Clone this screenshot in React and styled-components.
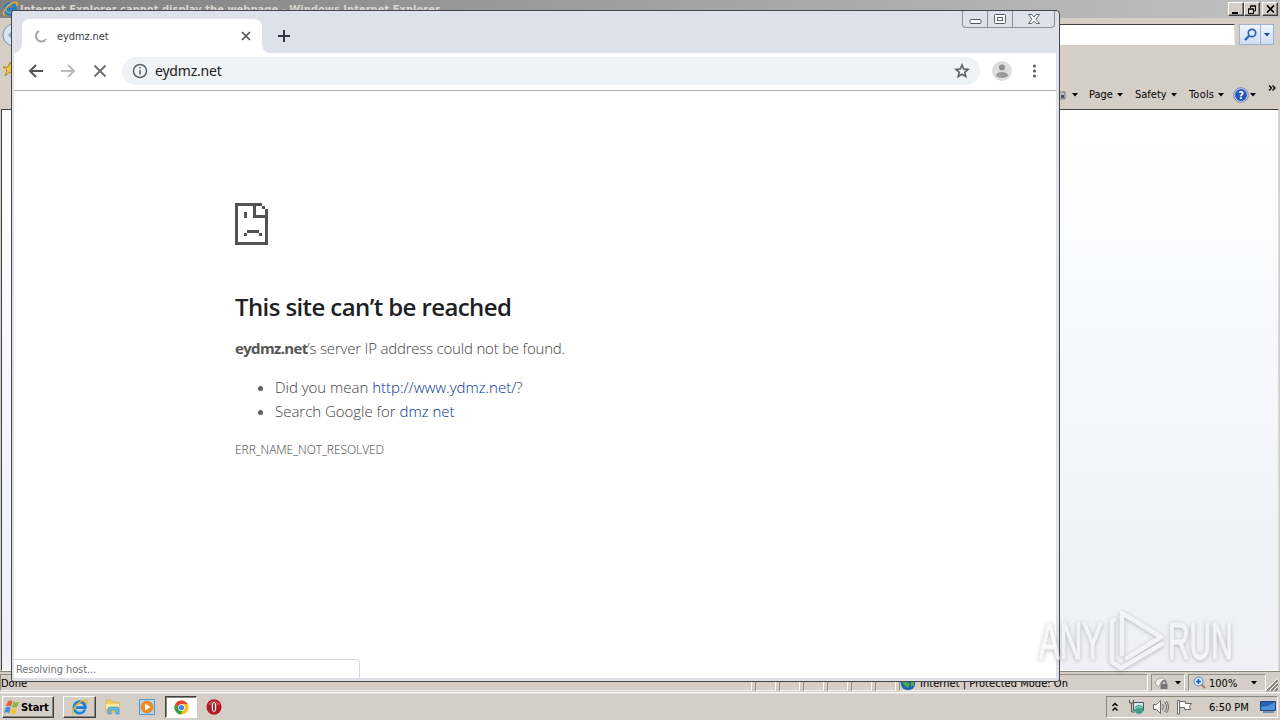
import React from "react";
import styled, { createGlobalStyle } from "styled-components";

const GlobalStyle = createGlobalStyle`
  * { box-sizing: border-box; }
  body {
    margin: 0;
    overflow: hidden;
    font-family: "DejaVu Sans Condensed", "DejaVu Sans", sans-serif;
    font-size: 11px;
    color: #000;
  }
  svg { display: block; flex: none; }
  h1, p, ul { margin: 0; }
`;

const Desktop = styled.div`
  position: relative;
  width: 1280px;
  height: 720px;
  overflow: hidden;
  display: flex;
  flex-direction: column;
  background: #d5cec6;
`;

const Label = styled.span`
  white-space: nowrap;
  font-size: ${(p) => p.$size || 11}px;
  font-weight: ${(p) => (p.$bold ? 700 : 400)};
  letter-spacing: ${(p) => p.$spacing || 0}px;
`;

/* Internet Explorer */

const IeTitle = styled.div`
  height: 18px;
  flex: none;
  display: flex;
  align-items: center;
  padding: 0 2px 0 2px;
  gap: 2px;
  background: linear-gradient(90deg, #808080, #c0c0c0);
  color: #d8d4cc;
`;

const TitleButtons = styled.div`
  display: flex;
  margin-left: auto;
`;

const TitleButton = styled.div`
  width: 16px;
  height: 14px;
  margin-left: ${(p) => p.$gap || 0}px;
  display: flex;
  align-items: center;
  justify-content: center;
  background: #d5cec6;
  border: 1px solid;
  border-color: #fff #404040 #404040 #fff;
  box-shadow: inset -1px -1px #8a857d;
`;

const AddressRow = styled.div`
  height: 33px;
  flex: none;
  display: flex;
  align-items: center;
  padding: 0 6px 0 2px;
  gap: 4px;
`;

const AddressField = styled.div`
  flex: 1;
  height: 22px;
  background: #fff;
  border: 1px solid;
  border-color: #404040 #e8e4de #d5cec6 #404040;
`;

const SearchGroup = styled.div`
  display: flex;
  height: 21px;
  width: 35px;
  border: 1px solid #9db2cc;
  background: linear-gradient(#eef4fc, #cfdef1);
`;

const SearchPart = styled.div`
  width: ${(p) => p.$width}px;
  display: flex;
  align-items: center;
  justify-content: center;
  & + & { border-left: 1px solid #9db2cc; }
`;

const FavoritesRow = styled.div`
  height: 29px;
  flex: none;
  display: flex;
  align-items: flex-end;
  padding: 0 0 4px 3px;
`;

const CommandBar = styled.div`
  height: 29px;
  flex: none;
  display: flex;
  align-items: center;
  justify-content: flex-end;
  padding-right: 4px;
`;

const CommandItem = styled.div`
  display: flex;
  align-items: center;
  justify-content: space-between;
  width: ${(p) => p.$width}px;
  margin-right: ${(p) => p.$after}px;
`;

const Chevrons = styled.div`
  align-self: flex-start;
  padding-top: 5px;
`;

const IePage = styled.div`
  flex: 1;
  margin: 0 1px 0 1px;
  border: 1px solid;
  border-color: #404040 #d8d8d8 #fff #404040;
  background: linear-gradient(#fff 5%, #f4f6fb 55%, #eef1f5 85%, #f0f0f5);
`;

const StatusBar = styled.div`
  height: 22px;
  flex: none;
  display: flex;
  align-items: stretch;
  gap: 3px;
  padding: 2px 0 1px;
  border-top: 1px solid #8a857d;
  border-bottom: 1px solid #fff;
`;

const StatusPanel = styled.div`
  width: ${(p) => p.$width}px;
  flex: none;
  display: flex;
  align-items: center;
  gap: ${(p) => p.$gap || 0}px;
  padding-top: 1px;
  padding-left: ${(p) => p.$pad || 0}px;
  border: 1px solid;
  border-color: #938d85 #fff #f6f3ee #938d85;
`;

/* Taskbar */

const Taskbar = styled.div`
  height: 27px;
  flex: none;
  display: flex;
  align-items: flex-start;
  padding: 2px 2px 0;
  border-top: 1px solid #e3ded7;
`;

const TaskButton = styled.div`
  width: ${(p) => p.$width}px;
  height: 22px;
  margin-left: ${(p) => p.$before || 0}px;
  display: flex;
  align-items: center;
  justify-content: center;
  background: ${(p) => (p.$pressed ? "#fdfdfc" : "transparent")};
  border: 1px solid;
  border-color: ${(p) =>
    p.$flat ? "transparent" : p.$pressed ? "#404040 #fff #fff #404040" : "#fff #404040 #404040 #fff"};
  box-shadow: ${(p) => (p.$flat ? "none" : p.$pressed ? "inset 1px 1px #8a857d" : "inset -1px -1px #8a857d")};
`;

const StartButton = styled(TaskButton)`
  justify-content: flex-start;
  padding-left: 1px;
`;

const Tray = styled.div`
  width: 172px;
  height: 22px;
  margin-left: auto;
  display: flex;
  align-items: center;
  padding: 0 1px 0 4px;
  border: 1px solid;
  border-color: #8a857d #fff #fff #8a857d;
`;

const Clock = styled.div`
  width: 46px;
  margin: 0 9px 0 16px;
`;

/* Chrome */

const ChromeWindow = styled.div`
  position: absolute;
  left: 11px;
  top: 10px;
  width: 1049px;
  height: 672px;
  display: flex;
  flex-direction: column;
  padding: 0 3px 3px 2px;
  background: #dee1e6;
  border: 1px solid #45474b;
  border-radius: 3px 4px 3px 3px;
  overflow: hidden;
`;

const TabStrip = styled.div`
  height: 42px;
  flex: none;
  display: flex;
  align-items: flex-end;
  background: #dee1e9;
`;

const Tab = styled.div`
  position: relative;
  width: 240px;
  height: 34px;
  margin-left: 8px;
  padding: 0 10px 0 12px;
  display: flex;
  align-items: center;
  gap: 10px;
  background: #fff;
  border-radius: 8px 8px 0 0;
  color: #3c4043;
  &::before, &::after {
    content: "";
    position: absolute;
    bottom: 0;
    width: 8px;
    height: 8px;
  }
  &::before {
    left: -8px;
    background: radial-gradient(circle at 0 0, transparent 7.5px, #fff 8px);
  }
  &::after {
    right: -8px;
    background: radial-gradient(circle at 100% 0, transparent 7.5px, #fff 8px);
  }
`;

const TabName = styled.div`
  flex: 1;
`;

const NewTab = styled.div`
  height: 34px;
  display: flex;
  align-items: center;
  margin-left: 16px;
`;

const WindowControls = styled.div`
  align-self: flex-start;
  display: flex;
  height: 17px;
  margin: 0 1px 0 auto;
  border: 1px solid #8c9096;
  border-top: 0;
  border-radius: 0 0 4px 4px;
`;

const Control = styled.div`
  width: ${(p) => p.$width}px;
  display: flex;
  align-items: center;
  justify-content: center;
  & + & { border-left: 1px solid #8c9096; }
`;

const Toolbar = styled.div`
  height: 38px;
  flex: none;
  display: flex;
  align-items: center;
  padding: 0 13px 1px 13px;
  background: #fff;
  border-bottom: 1px solid #b3b3b3;
`;

const NavButtons = styled.div`
  display: flex;
  gap: 14px;
`;

const Omnibox = styled.div`
  flex: 1;
  height: 28px;
  margin: 0 12px 0 13px;
  padding: 0 9px 0 10px;
  display: flex;
  align-items: center;
  gap: 7px;
  background: #f0f3f5;
  border-radius: 14px;
  color: #202124;
  font-family: "Noto Sans", sans-serif;
`;

const UrlText = styled.div`
  flex: 1;
  padding-bottom: 2px;
`;

const Viewport = styled.div`
  flex: 1;
  display: flex;
  flex-direction: column;
  justify-content: space-between;
  background: #fff;
`;

const ErrorPage = styled.div`
  padding: 112px 0 0 221px;
  font-family: "Open Sans", "Noto Sans", sans-serif;
  font-size: 15px;
  font-weight: 300;
  line-height: 24px;
  color: #424242;
`;

const Heading = styled.h1`
  margin-top: 46px;
  font-size: 24px;
  font-weight: 600;
  line-height: 32px;
  letter-spacing: -0.6px;
  color: #202124;
  white-space: nowrap;
`;

const Summary = styled.p`
  margin-top: 13px;
  letter-spacing: -0.2px;
`;

const Host = styled.strong`
  font-weight: 700;
  letter-spacing: -0.65px;
  color: #555;
`;

const Suggestions = styled.ul`
  margin-top: 15px;
  padding-left: 40px;
  letter-spacing: -0.02px;
  li::marker { color: #646464; }
`;

const Link = styled.a`
  color: #003594;
`;

const ErrorCode = styled.div`
  margin-top: 15px;
  font-size: 12px;
  letter-spacing: -0.06px;
`;

const StatusBubble = styled.div`
  width: 346px;
  height: 19px;
  padding: 0 0 0 2px;
  display: flex;
  align-items: center;
  border: 1px solid #d5d8dc;
  border-width: 1px 1px 0 0;
  border-radius: 0 4px 0 0;
  color: #707478;
`;

const Watermark = styled.svg`
  position: absolute;
  left: 1030px;
  top: 602px;
  overflow: visible;
  filter: drop-shadow(0 1px 2px rgba(90, 95, 105, 0.6));
`;

const Caret = () => (
  <svg width="6" height="4" viewBox="0 0 6 4"><path d="M0 0h6L3 3.5z" fill="#000" /></svg>
);

const IeIcon = ({ size = 18 }) => (
  <svg width={size} height={size} viewBox="0 0 18 18">
    <path d="M14.700 11.200a6 6 0 1 1 .4-3.100v1H5.500" fill="none" stroke="#1c7fd0" strokeWidth="3" />
    <path d="M13.800 10.700a5 5 0 0 1-9.500-1" fill="none" stroke="#65c5f3" strokeWidth="1" />
    <path d="M3 16.500C-1 15.500 4 5.500 12 2c4.500-2 6 0 4.500 3.500" fill="none" stroke="#f0b722" strokeWidth="1.500" />
  </svg>
);

const WindowsFlag = () => (
  <svg width="17" height="17" viewBox="0 0 17 17">
    <path d="M4 2c2-1 3-.7 4.500.2L7 7.500C5.500 6.500 4 6.500 2 7.300z" fill="#e8602c" />
    <path d="M9.500 2.800c2 1 3.500.8 5.500-.2l-1.600 5.200c-2 1-3.500 1-5.400.1z" fill="#7fb942" />
    <path d="M1.700 8.500c2-1 3.400-.8 5 .1L5.200 14c-1.600-1-3-1-5-.1z" fill="#3f8fd8" />
    <path d="M7.700 9.200c2 1 3.400.8 5.400-.1l-1.600 5.300c-2 1-3.500 1-5.300 0z" fill="#f8c42d" />
  </svg>
);

const FolderIcon = () => (
  <svg width="18" height="18" viewBox="0 0 18 18">
    <path d="M2 4V2h5l1 2h7v10H2z" fill="#edcf67" stroke="#cda63d" strokeWidth=".6" />
    <path d="M2 6h13v5H2z" fill="#faeaa0" />
    <path d="M4 16v-5q0-2 2-2h7q2 0 2 2v5h-3v-4H7v4z" fill="#68b8e2" stroke="#4389ae" strokeWidth=".6" />
  </svg>
);

const PlayerIcon = () => (
  <svg width="16" height="16" viewBox="0 0 16 16">
    <path d="M.5.500h15v15H.500z" fill="#b4d9f2" stroke="#5595c8" />
    <circle cx="8" cy="8" r="6" fill="#f28a1c" stroke="#c66b10" strokeWidth=".5" />
    <path d="M6 4.500v7L11.500 8z" fill="#fff" />
  </svg>
);

const ChromeIcon = () => (
  <svg width="15" height="15" viewBox="0 0 16 16">
    <circle cx="8" cy="8" r="7.500" fill="#fbc116" />
    <path d="M1.500 4.200A7.500 7.500 0 0 1 14.500 4.300H8L5 9.800z" fill="#df4636" />
    <path d="M1.500 4.200A7.500 7.500 0 0 0 7 15.400l3.300-5.500H5z" fill="#2ca24c" />
    <circle cx="8" cy="8" r="3.600" fill="#fff" />
    <circle cx="8" cy="8" r="2.800" fill="#4285e8" />
  </svg>
);

const OperaIcon = () => (
  <svg width="16" height="16" viewBox="0 0 16 16">
    <ellipse cx="8" cy="8" rx="7.500" ry="7.700" fill="#b71820" />
    <path d="M2 5Q8-2 14 5l-1 1H3z" fill="#df6a66" opacity=".6" />
    <ellipse cx="8" cy="8" rx="2.700" ry="5.500" fill="#fff" stroke="#7f0d12" strokeWidth=".6" />
    <ellipse cx="8" cy="8" rx=".9" ry="4.500" fill="#8e1218" />
  </svg>
);

const HelpIcon = () => (
  <svg width="16" height="16" viewBox="0 0 16 16">
    <circle cx="8" cy="8" r="7.300" fill="#c9d7f2" stroke="#7187b8" />
    <circle cx="8" cy="8" r="5.900" fill="#2455bd" />
    <text x="8" y="12" textAnchor="middle" fontSize="11" fontWeight="700" fill="#fff">?</text>
  </svg>
);

const Globe = () => (
  <svg width="16" height="16" viewBox="0 0 16 16">
    <circle cx="8" cy="8" r="7.300" fill="#2463b5" />
    <path d="M3 3q4-3 6 0L7 7l3 2-2 4-3-2-3-4zM11 5l3 1v4l-3 2z" fill="#48aa48" />
  </svg>
);

const SadPage = () => (
  <svg width="33" height="42" viewBox="0 0 33 42" shapeRendering="crispEdges" fill="#535353">
    <path d="M0 0h27v3H21v9h9v-3h3v33H0zM3 3v36h27V15H18V3z" fillRule="evenodd" />
    <path d="M27 3h3v3h-3zM30 6h3v6h-3zM9 9h3v6H9zM9 30h3v3H9zM12 27h12v3H12zM24 30h3v3h-3z" />
  </svg>
);

const InternetExplorer = () => (
  <>
    <IeTitle>
      <IeIcon size={16} />
      <Label $bold $size={11} $spacing={0.04}>
        Internet Explorer cannot display the webpage - Windows Internet Explorer
      </Label>
      <TitleButtons>
        <TitleButton><svg width="10" height="9"><path d="M1 8h6" stroke="#000" strokeWidth="2" /></svg></TitleButton>
        <TitleButton>
          <svg width="10" height="9" fill="none" stroke="#000">
            <path d="M3.500 3V1H8.500V6H7M3 1h6M1.500 4h5v4.500h-5zM1 4h6" />
          </svg>
        </TitleButton>
        <TitleButton $gap={2}>
          <svg width="9" height="8"><path d="M1 .500l7 7M8 .500l-7 7" stroke="#000" strokeWidth="1.700" /></svg>
        </TitleButton>
      </TitleButtons>
    </IeTitle>
    <AddressRow>
      <svg width="24" height="24" viewBox="0 0 24 24">
        <circle cx="12" cy="12" r="11" fill="#d8e3ef" stroke="#7e8fa5" />
        <path d="M14 6l-6 6 6 6" fill="none" stroke="#8ba9cd" strokeWidth="3" />
      </svg>
      <AddressField />
      <SearchGroup>
        <SearchPart $width={21}>
          <svg width="13" height="13" fill="none" stroke="#2460bd">
            <circle cx="8" cy="5" r="3.700" strokeWidth="1.700" />
            <path d="M5 8l-4 4" strokeWidth="2.400" />
          </svg>
        </SearchPart>
        <SearchPart $width={13}>
          <svg width="6" height="4"><path d="M0 0h6L3 3.500z" fill="#174ea3" /></svg>
        </SearchPart>
      </SearchGroup>
    </AddressRow>
    <FavoritesRow>
      <svg width="14" height="14"><path d="M7 0l2 5h5l-4 3 2 6-5-4-5 4 2-6-4-3h5z" fill="#f2c64c" stroke="#b88422" /></svg>
    </FavoritesRow>
    <CommandBar>
      <CommandItem $width={20} $after={11}>
        <svg width="8" height="12"><path d="M1 3h6v7H1z" fill="#b9bec4" stroke="#73777c" /><path d="M3 6h3v3H3z" fill="#4f5358" /></svg>
        <Caret />
      </CommandItem>
      <CommandItem $width={34} $after={12}><Label>Page</Label><Caret /></CommandItem>
      <CommandItem $width={42} $after={12}><Label>Safety</Label><Caret /></CommandItem>
      <CommandItem $width={35} $after={9}><Label $spacing={0.2}>Tools</Label><Caret /></CommandItem>
      <CommandItem $width={23} $after={12}><HelpIcon /><Caret /></CommandItem>
      <Chevrons>
        <svg width="8" height="6" fill="none" stroke="#000" strokeWidth="1.300"><path d="M1 .500l2.500 2.500L1 5.500M4.500.500L7 3 4.500 5.500" /></svg>
      </Chevrons>
    </CommandBar>
    <IePage />
    <StatusBar>
      <StatusPanel $width={752}><Label>Done</Label></StatusPanel>
      {[0, 1, 2, 3, 4, 5].map((n) => <StatusPanel key={n} $width={21} />)}
      <StatusPanel $width={249} $gap={4}>
        <Globe /><Label $spacing={0.04}>Internet | Protected Mode: On</Label>
      </StatusPanel>
      <StatusPanel $width={34} $pad={2} $gap={4}>
        <svg width="17" height="16" fill="none">
          <path d="M1 9q1-6 8-6l3 3-5 1-2 5z" fill="#f0f0f0" stroke="#aaa" />
          <path d="M8 9V7q2-3 4 0v2" stroke="#777" strokeWidth="1.400" />
          <path d="M6.500 9h7v5h-7z" fill="#777" />
        </svg>
        <Caret />
      </StatusPanel>
      <StatusPanel $width={78} $pad={4} $gap={3}>
        <svg width="13" height="14" fill="none">
          <path d="M8 8l4 4" stroke="#aa8246" strokeWidth="2" />
          <circle cx="5.500" cy="5.500" r="4.500" fill="#d6ebfa" stroke="#4e84c4" />
          <path d="M3 5.500h5M5.500 3v5" stroke="#185cae" strokeWidth="1.600" />
        </svg>
        <Label>100%</Label>
        <svg width="20" height="4"><path d="M11 0h6l-3 3.500z" /></svg>
      </StatusPanel>
      <svg width="12" height="18" style={{ marginLeft: -3 }}>
        <path d="M1 17L12 6M5 17l7-7M9 17l3-3" stroke="#8a857d" strokeWidth="2" />
        <path d="M0 16L12 4M4 16l8-8M8 16l4-4" stroke="#fff" />
      </svg>
    </StatusBar>
  </>
);

const Chrome = () => (
  <ChromeWindow>
    <TabStrip>
      <Tab>
        <svg width="13" height="13" fill="none"><path d="M5 1A5.500 5.500 0 1 0 12 9" stroke="#a5a7ab" strokeWidth="2" /></svg>
        <TabName><Label $spacing={-0.1}>eydmz.net</Label></TabName>
        <svg width="12" height="12"><path d="M2 2l8 8M10 2l-8 8" stroke="#505458" strokeWidth="1.700" /></svg>
      </Tab>
      <NewTab><svg width="12" height="12"><path d="M6 0v12M0 6h12" stroke="#343746" strokeWidth="2" /></svg></NewTab>
      <WindowControls>
        <Control $width={24}><svg width="13" height="15"><rect x="1" y="7.500" width="11" height="4" rx="1" fill="#fff" stroke="#555b66" /></svg></Control>
        <Control $width={25}>
          <svg width="12" height="11" fill="#fff" stroke="#555b66"><rect x=".5" y=".5" width="11" height="9" rx="1" /><rect x="3.500" y="3.500" width="5" height="3" /></svg>
        </Control>
        <Control $width={42}>
          <svg width="12" height="11" viewBox="0 0 12 11"><path d="M.5.500h3.300L6 3 8.200.500h3.300L8 5.200l3.500 4.300H8.200L6 7.200 3.800 9.500H.5L4 5.200z" fill="#fff" stroke="#626873" /></svg>
        </Control>
      </WindowControls>
    </TabStrip>
    <Toolbar>
      <NavButtons>
        <svg width="18" height="16" fill="none"><path d="M16 8H3M9 2L3 8l6 6" stroke="#505458" strokeWidth="2" /></svg>
        <svg width="18" height="16" fill="none"><path d="M2 8h13M9 2l6 6-6 6" stroke="#b9bbbe" strokeWidth="2" /></svg>
        <svg width="18" height="16"><path d="M3.500 2.500l11 11M14.500 2.500l-11 11" stroke="#6a6e73" strokeWidth="1.900" /></svg>
      </NavButtons>
      <Omnibox>
        <svg width="16" height="16" fill="none" stroke="#5f6368" strokeWidth="1.500"><circle cx="8" cy="8" r="6.500" /><path d="M8 7v4.500M8 4v1.600" strokeWidth="1.600" /></svg>
        <UrlText><Label $size={14} $spacing={-0.2}>eydmz.net</Label></UrlText>
        <svg width="18" height="18" viewBox="0 0 24 24"><path d="M22 9.240l-7.190-.62L12 2 9.190 8.630 2 9.240l5.460 4.730L5.820 21 12 17.270 18.180 21l-1.630-7.030L22 9.240zM12 15.400l-3.760 2.270 1-4.280-3.320-2.880 4.380-.38L12 6.100l1.710 4.040 4.380.38-3.320 2.880 1 4.280L12 15.400z" fill="#53575c" stroke="#53575c" strokeWidth=".5" /></svg>
      </Omnibox>
      <svg width="20" height="20"><circle cx="10" cy="10" r="10" fill="#dedede" /><circle cx="10" cy="6.500" r="3" fill="#8f8f8f" /><ellipse cx="10" cy="14" rx="6" ry="3" fill="#9a9a9a" /></svg>
      <svg width="18" height="16" style={{ marginLeft: 13 }} fill="#5f6368"><circle cx="9.500" cy="3" r="1.600" /><circle cx="9.500" cy="8" r="1.600" /><circle cx="9.500" cy="13" r="1.600" /></svg>
    </Toolbar>
    <Viewport>
      <ErrorPage>
        <SadPage />
        <Heading>This site can’t be reached</Heading>
        <Summary><Host>eydmz.net</Host>’s server IP address could not be found.</Summary>
        <Suggestions>
          <li>Did you mean <Link>http://www.ydmz.net/</Link>?</li>
          <li>Search Google for <Link>dmz net</Link></li>
        </Suggestions>
        <ErrorCode>ERR_NAME_NOT_RESOLVED</ErrorCode>
      </ErrorPage>
      <StatusBubble><Label $spacing={-0.08}>Resolving host...</Label></StatusBubble>
    </Viewport>
  </ChromeWindow>
);

const WindowsTaskbar = () => (
  <Taskbar>
    <StartButton $width={52}><WindowsFlag /><Label $bold $spacing={-0.1}>Start</Label></StartButton>
    <TaskButton $width={33} $before={9}><IeIcon size={17} /></TaskButton>
    <TaskButton $width={32} $before={1} $flat><FolderIcon /></TaskButton>
    <TaskButton $width={32} $before={2} $flat><PlayerIcon /></TaskButton>
    <TaskButton $width={32} $before={2} $pressed><ChromeIcon /></TaskButton>
    <TaskButton $width={32} $before={1} $flat><OperaIcon /></TaskButton>
    <Tray>
      <svg width="9" height="10" fill="none" stroke="#000" strokeWidth="1.400"><path d="M1.500 4l2.500-2.500L6.500 4M1.500 8.500L4 6l2.500 2.500" /></svg>
      <svg width="17" height="16" style={{ marginLeft: 8 }}>
        <path d="M5.500 3.500h10v8h-10z" fill="#dce9ed" stroke="#4a5659" />
        <path d="M1.500 1v3h4V1M3.500 4v9h3" fill="none" stroke="#555" />
        <circle cx="11" cy="10.500" r="4.500" fill="#409e8b" /><path d="M7 10q3-4 7-1" stroke="#b7ded6" fill="none" />
      </svg>
      <svg width="17" height="16" style={{ marginLeft: 7 }} fill="#f8f8f8" stroke="#686868">
        <path d="M1.500 5.500h3l4-4v13l-4-4h-3z" /><path d="M10.500 5q2 3 0 6M12.500 3q4 5 0 10M14.500 2q4 6 0 12" fill="none" />
      </svg>
      <svg width="17" height="16" style={{ marginLeft: 7 }} fill="#fff" stroke="#686868"><path d="M1.500 15V1.500h2V15zM3.500 2.500h6v2h6l-2 3 1 3h-6v-2h-5z" /></svg>
      <Clock><Label>6:50 PM</Label></Clock>
      <svg width="16" height="14"><path d="M.5 1.500h15v9H.500z" fill="#2464b8" stroke="#23477e" /><path d="M1 7q7 0 14-5v8H1z" fill="#4f91d8" /><path d="M3 11h11v2H3z" fill="#7890ad" /></svg>
    </Tray>
  </Taskbar>
);

const App = () => (
  <Desktop>
    <GlobalStyle />
    <InternetExplorer />
    <WindowsTaskbar />
    <Chrome />
    <Watermark width="212" height="80" viewBox="0 0 212 80" opacity=".65">
      <g fill="#f6f6f6" stroke="#f6f6f6" strokeWidth="1.200" fontFamily="Liberation Sans, sans-serif" fontSize="52">
        <text transform="translate(9 57) scale(.6 1)">ANY</text>
        <text transform="translate(138 57) scale(.575 1)">RUN</text>
      </g>
      <g fill="none" stroke="#f6f6f6" strokeWidth="4.500" strokeLinejoin="round" strokeLinecap="round">
        <path d="M92 52V11l39 24-34 21M84 18l-2 1v41l9 6 41-24" />
      </g>
    </Watermark>
  </Desktop>
);

export default App;
